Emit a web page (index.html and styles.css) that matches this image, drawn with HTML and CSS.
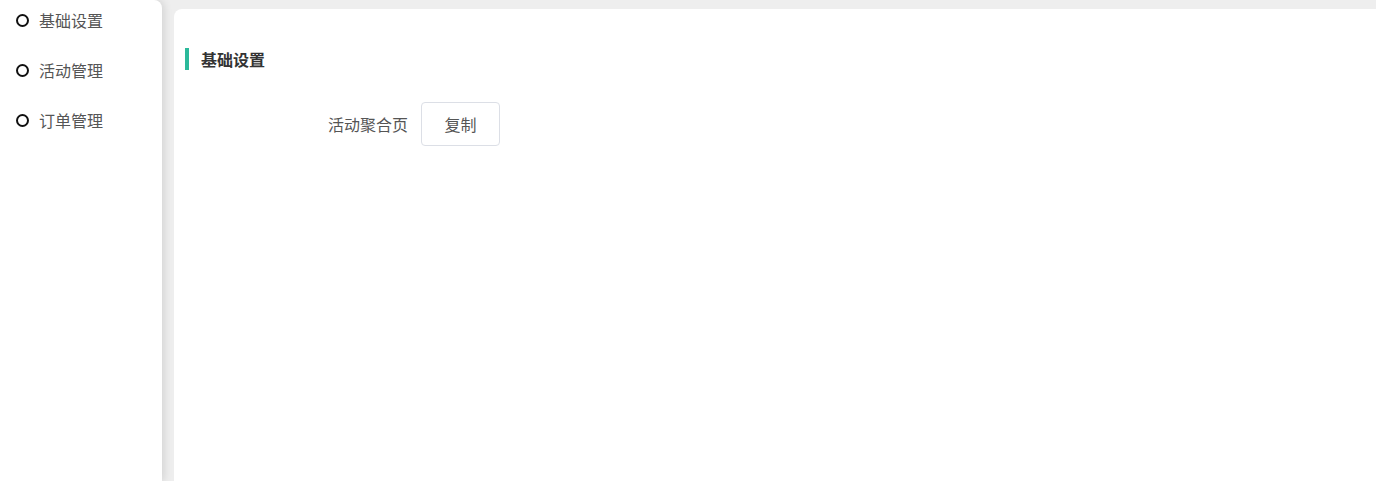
FILE: index.html
```html
<!DOCTYPE html>
<html lang="zh">
<head>
<meta charset="utf-8">
<title>设置</title>
<link rel="stylesheet" href="styles.css">
</head>
<body>
<div class="layout">
  <aside class="sidebar">
    <ul class="menu">
      <li class="menu-item"><span class="dot"></span><span class="menu-text">基础设置</span></li>
      <li class="menu-item"><span class="dot"></span><span class="menu-text">活动管理</span></li>
      <li class="menu-item"><span class="dot"></span><span class="menu-text">订单管理</span></li>
    </ul>
  </aside>
  <main class="main">
    <section class="card">
      <h2 class="section-title">基础设置</h2>
      <div class="form-row">
        <label class="form-label">活动聚合页</label>
        <button class="btn">复制</button>
      </div>
    </section>
  </main>
</div>
</body>
</html>
```
FILE: styles.css
```css
* { box-sizing: border-box; }
html, body {
  margin: 0;
  padding: 0;
  height: 100%;
  background: #eeeeee;
  font-family: "Noto Sans CJK SC", "Noto Sans", sans-serif;
  overflow: hidden;
}
.layout {
  display: flex;
  height: 481px;
}
.sidebar {
  width: 162px;
  flex: 0 0 162px;
  background: #fff;
  border-top-right-radius: 8px;
  box-shadow: 2px 0 8px rgba(0, 0, 0, 0.12);
  position: relative;
  z-index: 1;
}
.menu {
  list-style: none;
  margin: -5px 0 0 0;
  padding: 0;
}
.menu-item {
  height: 50px;
  display: flex;
  align-items: center;
  padding-left: 16px;
}
.dot {
  width: 13px;
  height: 13px;
  border: 2px solid #111;
  border-radius: 50%;
  flex: 0 0 13px;
}
.menu-text {
  margin-left: 10px;
  font-size: 16px;
  color: #555;
  line-height: 22px;
}
.main {
  flex: 1;
  padding: 9px 0 0 12px;
  display: flex;
}
.card {
  flex: 1;
  background: #fff;
  border-top-left-radius: 8px;
  padding: 39px 0 0 11px;
}
.section-title {
  margin: 0;
  font-size: 16px;
  font-weight: bold;
  color: #333;
  line-height: 22px;
  border-left: 4px solid #2bb99a;
  padding-left: 12px;
}
.form-row {
  display: flex;
  align-items: center;
  margin-top: 32px;
}
.form-label {
  width: 223px;
  text-align: right;
  font-size: 16px;
  color: #555;
  margin-right: 13px;
}
.btn {
  width: 79px;
  height: 44px;
  background: #fff;
  border: 1px solid #dcdfe6;
  border-radius: 4px;
  font-family: inherit;
  font-size: 16px;
  color: #555;
  padding: 0;
}
```
